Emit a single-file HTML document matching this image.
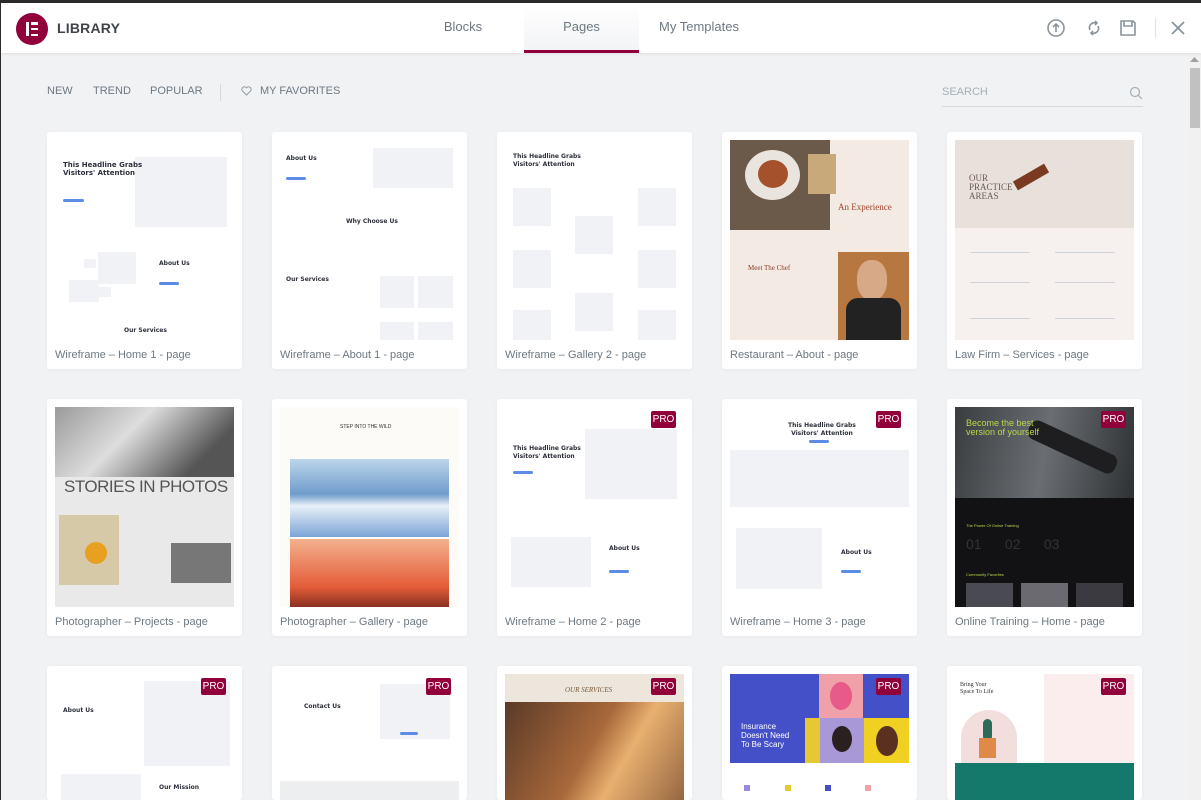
<!DOCTYPE html>
<html><head><meta charset="utf-8"><style>
*{margin:0;padding:0;box-sizing:border-box}
html,body{width:1201px;height:800px;overflow:hidden}
body{background:#2b2b2b;font-family:"Liberation Sans",Arial,sans-serif;position:relative}
#app{position:absolute;left:1px;top:3px;width:1200px;height:797px;background:#f1f2f4;overflow:hidden}
#hdr{position:absolute;left:0;top:0;width:1200px;height:50px;background:#fff;box-shadow:0 1px 3px rgba(0,0,0,.08);z-index:2}
.logo{position:absolute;left:15px;top:10px;width:32px;height:32px;border-radius:50%;background:#92003b}
.logo i{position:absolute;background:#fff}
.ttl{position:absolute;left:56px;top:17px;font-size:14px;font-weight:bold;color:#3f444b;letter-spacing:.2px}
.tab{position:absolute;top:0;height:50px;line-height:48px;font-size:13px;color:#6d7882;text-align:center}
.tab.act{background:linear-gradient(#fff,#f3f4f6);border-bottom:3px solid #92003b;color:#6d7882}
.ico{position:absolute;top:15px}
.flt{position:absolute;top:82px;font-size:11px;color:#6d7882}
.card{position:absolute;width:195px;height:237px;background:#fff;border-radius:3px;box-shadow:0 1px 4px rgba(0,0,0,.04);overflow:hidden}
.th{position:absolute;left:8px;top:8px;width:179px;height:200px;overflow:hidden;background:#fff}
.lb{position:absolute;left:8px;top:217px;font-size:11px;color:#6d7882;white-space:nowrap}
.th div{position:absolute}
.g{background:#f1f2f5}
.b{background:#5b8de8;border-radius:2px;height:3px}
.h{font-family:"DejaVu Sans",sans-serif;font-weight:bold;color:#2c2f3a;font-size:7px;line-height:8px;white-space:nowrap}
.t{background:#cfd2d8;height:1px}
.pro{position:absolute;right:8px;top:4px;width:25px;height:17px;background:#92003b;color:#fff;font-size:10px;line-height:17px;text-align:center;border-radius:2px;z-index:3}
#sb{position:absolute;right:0;top:50px;width:13px;height:747px;background:#f1f1f1}
#sb i{position:absolute;left:2px;top:15px;width:10px;height:60px;background:#c1c1c1}
</style></head><body><div id="app">
<div id="hdr">
 <div class="logo"><i style="left:10px;top:9px;width:3px;height:14px"></i><i style="left:15px;top:9px;width:7px;height:2.5px"></i><i style="left:15px;top:14.7px;width:7px;height:2.5px"></i><i style="left:15px;top:20.5px;width:7px;height:2.5px"></i></div>
 <div class="ttl">LIBRARY</div>
 <div class="tab" style="left:423px;width:78px">Blocks</div>
 <div class="tab act" style="left:523px;width:115px">Pages</div>
 <div class="tab" style="left:638px;width:120px">My Templates</div>
 <svg class="ico" style="left:1045px" width="20" height="20" viewBox="0 0 20 20" fill="none" stroke="#8a949c" stroke-width="1.6"><circle cx="10" cy="10" r="8"/><path d="M10 14V6M7 9l3-3 3 3"/></svg>
 <svg class="ico" style="left:1083px" width="20" height="20" viewBox="0 0 20 20" fill="none" stroke="#8a949c" stroke-width="1.6"><path d="M6 12a5 5 0 0 1 6-7M14 8a5 5 0 0 1-6 7"/><path d="M11 3l2 2-2 2M9 17l-2-2 2-2"/></svg>
 <svg class="ico" style="left:1117px" width="20" height="20" viewBox="0 0 20 20" fill="none" stroke="#8a949c" stroke-width="1.6"><path d="M3 3h12l2 2v12H3z"/><path d="M6 3v5h8V3"/></svg>
 <div style="position:absolute;left:1154px;top:15px;width:1px;height:20px;background:#e0e2e5"></div>
 <svg class="ico" style="left:1168px;top:16px" width="18" height="18" viewBox="0 0 18 18" stroke="#8a949c" stroke-width="1.8"><path d="M3 3l12 12M15 3L3 15"/></svg>
</div>
<div class="flt" style="left:46px">NEW</div>
<div class="flt" style="left:92px">TREND</div>
<div class="flt" style="left:149px">POPULAR</div>
<div style="position:absolute;left:219px;top:81px;width:1px;height:17px;background:#d5d8dc"></div>
<svg style="position:absolute;left:240px;top:83px" width="11" height="10" viewBox="0 0 12 11" fill="none" stroke="#8a949c"><path d="M6 10L1.5 5.5A2.6 2.6 0 0 1 6 2a2.6 2.6 0 0 1 4.5 3.5z"/></svg>
<div class="flt" style="left:259px">MY FAVORITES</div>
<div style="position:absolute;left:941px;top:83px;font-size:11px;color:#a4afb7">SEARCH</div>
<svg style="position:absolute;left:1128px;top:83px" width="14" height="14" viewBox="0 0 14 14" fill="none" stroke="#a4afb7" stroke-width="1.2"><circle cx="6" cy="6" r="4.5"/><path d="M9.3 9.3L13 13"/></svg>
<div style="position:absolute;left:941px;top:103px;width:201px;height:1px;background:#d5d8dc"></div>

<!-- Row 1 -->
<div class="card" style="left:46px;top:129px"><div class="th">
 <div class="g" style="left:80px;top:17px;width:92px;height:70px"></div>
 <div class="h" style="left:8px;top:21px">This Headline Grabs<br>Visitors' Attention</div>
 <div class="b" style="left:8px;top:59px;width:21px"></div>
 <div class="g" style="left:43px;top:112px;width:38px;height:32px"></div><div class="g" style="left:14px;top:140px;width:30px;height:22px"></div><div class="g" style="left:29px;top:119px;width:12px;height:9px"></div><div class="g" style="left:43px;top:147px;width:13px;height:10px"></div>
 <div class="h" style="left:104px;top:120px;font-size:6px">About Us</div><div class="b" style="left:104px;top:142px;width:20px"></div>
 <div class="h" style="left:69px;top:187px;font-size:6px">Our Services</div>
</div><div class="lb">Wireframe – Home 1 - page</div></div>

<div class="card" style="left:271px;top:129px"><div class="th">
 <div class="g" style="left:93px;top:8px;width:80px;height:40px"></div>
 <div class="h" style="left:6px;top:15px;font-size:6px">About Us</div><div class="b" style="left:6px;top:37px;width:20px"></div>
 <div class="h" style="left:66px;top:78px;font-size:6px">Why Choose Us</div>
 <div class="h" style="left:6px;top:136px;font-size:6px">Our Services</div>
 <div class="g" style="left:100px;top:136px;width:34px;height:32px"></div><div class="g" style="left:138px;top:136px;width:35px;height:32px"></div>
 <div class="g" style="left:100px;top:182px;width:34px;height:20px"></div><div class="g" style="left:138px;top:182px;width:35px;height:20px"></div>
</div><div class="lb">Wireframe – About 1 - page</div></div>

<div class="card" style="left:496px;top:129px"><div class="th">
 <div class="h" style="left:8px;top:13px;font-size:6px">This Headline Grabs<br>Visitors' Attention</div>
 <div class="g" style="left:8px;top:48px;width:38px;height:38px"></div><div class="g" style="left:70px;top:76px;width:38px;height:38px"></div><div class="g" style="left:133px;top:48px;width:38px;height:38px"></div>
 <div class="g" style="left:8px;top:110px;width:38px;height:38px"></div><div class="g" style="left:133px;top:110px;width:38px;height:38px"></div><div class="g" style="left:70px;top:153px;width:38px;height:38px"></div>
 <div class="g" style="left:8px;top:170px;width:38px;height:30px"></div><div class="g" style="left:133px;top:170px;width:38px;height:30px"></div>
</div><div class="lb">Wireframe – Gallery 2 - page</div></div>

<div class="card" style="left:721px;top:129px"><div class="th" style="background:#f3ebe3">
 <div style="left:0;top:0;width:100px;height:90px;background:#6b5a4a"></div>
 <div style="left:15px;top:10px;width:55px;height:50px;border-radius:50%;background:#e9e4de"></div>
 <div style="left:28px;top:20px;width:30px;height:28px;border-radius:50%;background:#a5522c"></div>
 <div style="left:78px;top:14px;width:28px;height:40px;background:#c8a97a"></div>
 <div style="left:108px;top:62px;font-family:'Liberation Serif',serif;font-size:9px;color:#a0432a;white-space:nowrap">An Experience</div>
 <div style="left:18px;top:124px;font-family:'Liberation Serif',serif;font-size:7px;color:#8a3a22">Meet The Chef</div>
 <div style="left:108px;top:112px;width:71px;height:88px;background:#b77740"></div>
 <div style="left:127px;top:120px;width:30px;height:40px;border-radius:45%;background:#d8a987"></div>
 <div style="left:116px;top:158px;width:55px;height:42px;background:#222;border-radius:12px 12px 0 0"></div>
</div><div class="lb">Restaurant – About - page</div></div>

<div class="card" style="left:946px;top:129px"><div class="th" style="background:#f6f1ee">
 <div style="left:0;top:0;width:179px;height:88px;background:#e8e1db"></div>
 <div style="left:14px;top:34px;font-family:'Liberation Serif',serif;font-size:9px;line-height:9px;color:#6a5a50">OUR<br>PRACTICE<br>AREAS</div>
 <div style="left:58px;top:32px;width:36px;height:10px;background:#7a3a22;transform:rotate(-30deg)"></div>
 <div class="t" style="left:15px;top:112px;width:60px"></div><div class="t" style="left:100px;top:112px;width:60px"></div>
 <div class="t" style="left:15px;top:142px;width:60px"></div><div class="t" style="left:100px;top:142px;width:60px"></div>
 <div class="t" style="left:15px;top:178px;width:60px"></div><div class="t" style="left:100px;top:178px;width:60px"></div>
</div><div class="lb">Law Firm – Services - page</div></div>

<!-- Row 2 -->
<div class="card" style="left:46px;top:396px"><div class="th" style="background:#e9e9e9">
 <div style="left:0;top:0;width:179px;height:70px;background:linear-gradient(135deg,#9a9a9a,#ddd 40%,#555 80%)"></div>
 <div style="left:9px;top:70px;font-size:17px;color:#555;white-space:nowrap;letter-spacing:-.5px">STORIES IN PHOTOS</div>
 <div style="left:4px;top:108px;width:60px;height:70px;background:#d6c9a8"></div>
 <div style="left:30px;top:135px;width:22px;height:22px;border-radius:50%;background:#e8a020"></div>
 <div style="left:116px;top:136px;width:60px;height:40px;background:#777"></div>
</div><div class="lb">Photographer – Projects - page</div></div>

<div class="card" style="left:271px;top:396px"><div class="th" style="background:#fdfbf8">
 <div style="left:60px;top:17px;font-size:5px;color:#333;white-space:nowrap">STEP INTO THE WILD</div>
 <div style="left:10px;top:52px;width:159px;height:78px;background:linear-gradient(#bcd6ea,#6f9ccc 45%,#e8f0f8 60%,#7ba4d6)"></div>
 <div style="left:10px;top:132px;width:159px;height:68px;background:linear-gradient(#f4b18d,#e45d3a 70%,#8a3020)"></div>
</div><div class="lb">Photographer – Gallery - page</div></div>

<div class="card" style="left:496px;top:396px"><div class="th"><span class="pro">PRO</span>
 <div class="g" style="left:80px;top:22px;width:92px;height:70px"></div>
 <div class="h" style="left:8px;top:38px;font-size:6px">This Headline Grabs<br>Visitors' Attention</div><div class="b" style="left:8px;top:64px;width:20px"></div>
 <div class="g" style="left:6px;top:130px;width:80px;height:50px"></div>
 <div class="h" style="left:104px;top:138px;font-size:6px">About Us</div><div class="b" style="left:104px;top:163px;width:20px"></div>
</div><div class="lb">Wireframe – Home 2 - page</div></div>

<div class="card" style="left:721px;top:396px"><div class="th"><span class="pro">PRO</span>
 <div class="h" style="left:58px;top:15px;font-size:6px;text-align:center">This Headline Grabs<br>Visitors' Attention</div><div class="b" style="left:79px;top:33px;width:20px"></div>
 <div class="g" style="left:0;top:43px;width:179px;height:57px"></div>
 <div class="g" style="left:6px;top:121px;width:86px;height:61px"></div>
 <div class="h" style="left:111px;top:142px;font-size:6px">About Us</div><div class="b" style="left:111px;top:163px;width:20px"></div>
</div><div class="lb">Wireframe – Home 3 - page</div></div>

<div class="card" style="left:946px;top:396px"><div class="th" style="background:#121214"><span class="pro">PRO</span>
 <div style="left:0;top:0;width:179px;height:91px;background:linear-gradient(100deg,#3a3d40,#6a6e72 50%,#2e3134)"></div>
 <div style="left:70px;top:30px;width:95px;height:20px;background:#1e1e20;transform:rotate(25deg);border-radius:8px"></div>
 <div style="left:11px;top:12px;font-size:9px;line-height:9px;color:#b8d94a;white-space:nowrap">Become the best<br>version of yourself</div>
 <div style="left:11px;top:116px;font-size:4px;color:#b8d94a;white-space:nowrap">The Power Of Online Training</div>
 <div style="left:11px;top:129px;font-size:14px;color:#333;white-space:nowrap">01 &nbsp; &nbsp; &nbsp;02 &nbsp; &nbsp; &nbsp;03</div>
 <div style="left:11px;top:165px;font-size:4px;color:#b8d94a;white-space:nowrap">Community Favorites</div>
 <div style="left:11px;top:176px;width:47px;height:24px;background:#4a4a52"></div><div style="left:66px;top:176px;width:47px;height:24px;background:#6a6a70"></div><div style="left:121px;top:176px;width:47px;height:24px;background:#3a3a40"></div>
</div><div class="lb">Online Training – Home - page</div></div>

<!-- Row 3 -->
<div class="card" style="left:46px;top:663px;height:134px"><div class="th"><span class="pro">PRO</span>
 <div class="g" style="left:89px;top:7px;width:86px;height:85px"></div>
 <div class="h" style="left:8px;top:33px;font-size:6px">About Us</div>
 <div class="h" style="left:104px;top:110px;font-size:6px">Our Mission</div>
 <div class="g" style="left:6px;top:100px;width:80px;height:100px"></div>
</div></div>

<div class="card" style="left:271px;top:663px;height:134px"><div class="th"><span class="pro">PRO</span>
 <div class="h" style="left:24px;top:29px;font-size:6px">Contact Us</div>
 <div class="g" style="left:100px;top:10px;width:70px;height:55px"></div><div class="b" style="left:120px;top:58px;width:18px"></div>
 <div class="g" style="left:0;top:107px;width:179px;height:93px;background:#eceef0"></div>
</div></div>

<div class="card" style="left:496px;top:663px;height:134px"><div class="th" style="background:#ede6dc"><span class="pro">PRO</span>
 <div style="left:60px;top:12px;font-family:'Liberation Serif',serif;font-style:italic;font-size:7px;color:#7a5a3a;white-space:nowrap">OUR SERVICES</div>
 <div style="left:0;top:28px;width:179px;height:172px;background:linear-gradient(120deg,#5a3a28,#a8683a 40%,#e8b070 55%,#6a4028)"></div>
</div></div>

<div class="card" style="left:721px;top:663px;height:134px"><div class="th"><span class="pro">PRO</span>
 <div style="left:0;top:0;width:179px;height:89px;background:#4450c8"></div>
 <div style="left:89px;top:0;width:44px;height:44px;background:#f0a0a8"></div>
 <div style="left:75px;top:44px;width:15px;height:45px;background:#e8c830"></div>
 <div style="left:90px;top:44px;width:44px;height:45px;background:#a898d8"></div>
 <div style="left:134px;top:44px;width:45px;height:45px;background:#f0d020"></div>
 <div style="left:100px;top:8px;width:22px;height:28px;border-radius:50%;background:#e85a8a"></div>
 <div style="left:102px;top:52px;width:20px;height:26px;border-radius:50%;background:#2a2020"></div>
 <div style="left:146px;top:52px;width:22px;height:30px;border-radius:50%;background:#5a3020"></div>
 <div style="left:11px;top:48px;font-size:8px;line-height:9px;color:#fff;white-space:nowrap">Insurance<br>Doesn't Need<br>To Be Scary</div>
 <div style="left:14px;top:111px;width:6px;height:6px;background:#9a8ad8"></div><div style="left:55px;top:111px;width:6px;height:6px;background:#e8c830"></div><div style="left:95px;top:111px;width:6px;height:6px;background:#4450c8"></div><div style="left:135px;top:111px;width:6px;height:6px;background:#f0a0a8"></div>
</div></div>

<div class="card" style="left:946px;top:663px;height:134px"><div class="th"><span class="pro">PRO</span>
 <div style="left:89px;top:0;width:90px;height:89px;background:#fbecee"></div>
 <div style="left:5px;top:8px;font-family:'Liberation Serif',serif;font-size:6px;line-height:7px;color:#333;white-space:nowrap">Bring Your<br>Space To Life</div>
 <div style="left:6px;top:36px;width:56px;height:53px;background:#f3dede;border-radius:28px 28px 0 0"></div>
 <div style="left:28px;top:45px;width:9px;height:22px;background:#2c6a5a;border-radius:5px"></div>
 <div style="left:24px;top:64px;width:17px;height:20px;background:#e08a4a"></div>
 <div style="left:0;top:89px;width:179px;height:111px;background:#14786a"></div>
</div></div>

<div id="sb"><i></i><svg style="position:absolute;left:2px;top:4px" width="9" height="6"><path d="M0 5h9L4.5 0z" fill="#a0a0a0"/></svg></div>
</div></body></html>
